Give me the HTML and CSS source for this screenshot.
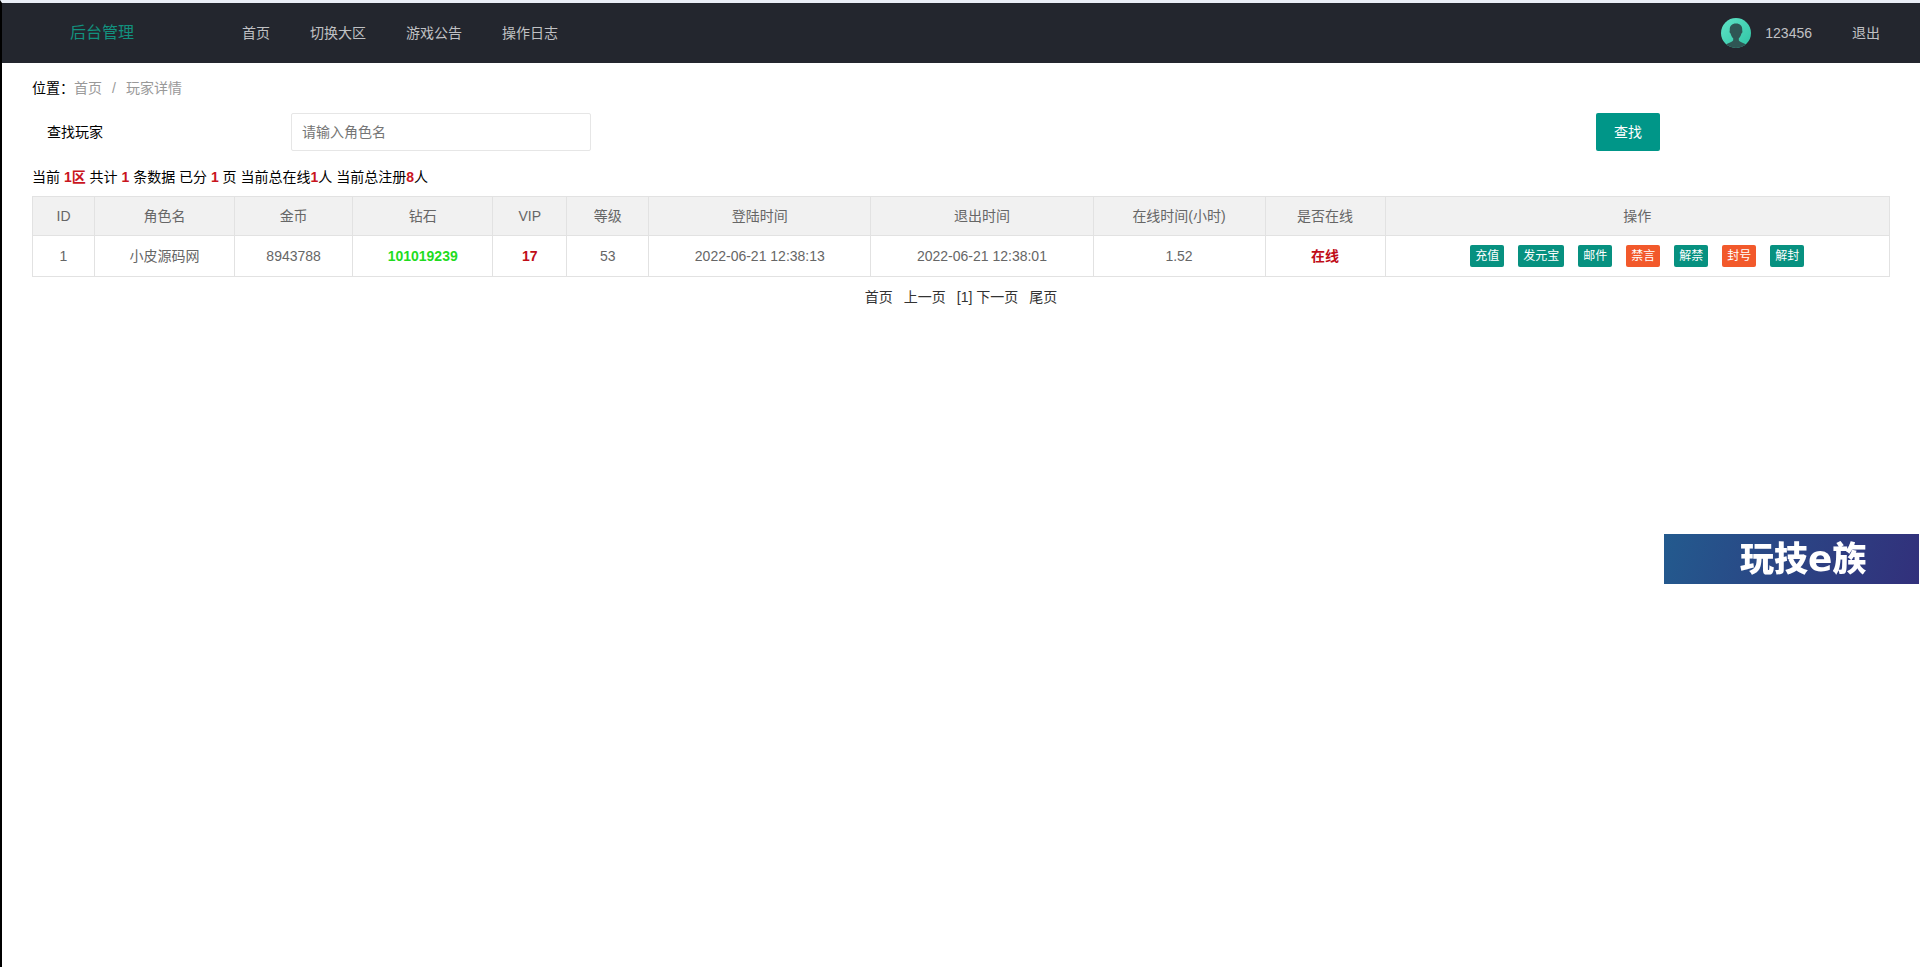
FILE: index.html
```html
<!DOCTYPE html>
<html lang="zh-CN">
<head>
<meta charset="utf-8">
<title>后台管理</title>
<link rel="stylesheet" href="styles.css">
</head>
<body>
<header class="header">
  <a class="logo" href="#">后台管理</a>
  <nav class="nav">
    <a href="#">首页</a>
    <a href="#">切换大区</a>
    <a href="#">游戏公告</a>
    <a href="#">操作日志</a>
  </nav>
  <div class="user">
    <a class="account" href="#">
      <svg class="avatar" viewBox="0 0 30 30" aria-hidden="true">
        <defs>
          <linearGradient id="mint" x1="0" y1="0" x2="1" y2="1"><stop offset="0" stop-color="#5fe3c6"/><stop offset="1" stop-color="#2fc4a4"/></linearGradient>
          <clipPath id="disc"><circle cx="15" cy="15" r="15"/></clipPath>
        </defs>
        <g clip-path="url(#disc)">
          <rect width="30" height="30" fill="url(#mint)"/>
          <path d="M15 5.500c-4.500 0-6.500 2.800-6.200 6.500 0 .6-.3 1-.2 2 .1.9.6 1.300 1 1.500.5 2.200 1.400 3.700 2.600 4.800v2c-.9 2-5 2.200-7.400 4.700V31h20.400v-4c-2.400-2.500-6.500-2.700-7.400-4.700v-2c1.200-1.100 2.100-2.600 2.600-4.800.4-.2.900-.6 1-1.500.1-1-.2-1.400-.2-2 .3-3.700-1.700-6.500-6.200-6.500z" fill="#2f5654"/>
        </g>
      </svg>
      <span>123456</span>
    </a>
    <a href="#">退出</a>
  </div>
</header>
<main class="main">
  <div class="crumbs">位置：<a href="#">首页</a><span class="slash">/</span><a href="#">玩家详情</a></div>
  <form class="search">
    <label for="role">查找玩家</label>
    <input id="role" type="text" placeholder="请输入角色名">
    <button class="find" type="button">查找</button>
  </form>
  <p class="stats">当前 <b>1区</b> 共计 <b>1</b> 条数据 已分 <b>1</b> 页 当前总在线<b>1</b>人 当前总注册<b>8</b>人</p>
  <table class="players">
    <colgroup>
      <col class="c-id"><col class="c-name"><col class="c-gold"><col class="c-name"><col class="c-vip"><col class="c-level"><col class="c-time"><col class="c-time"><col class="c-hours"><col class="c-online"><col class="c-actions">
    </colgroup>
    <thead>
      <tr><th>ID</th><th>角色名</th><th>金币</th><th>钻石</th><th>VIP</th><th>等级</th><th>登陆时间</th><th>退出时间</th><th>在线时间(小时)</th><th>是否在线</th><th>操作</th></tr>
    </thead>
    <tbody>
      <tr>
        <td>1</td><td>小皮源码网</td><td>8943788</td><td class="green">101019239</td><td class="red">17</td><td>53</td><td>2022-06-21 12:38:13</td><td>2022-06-21 12:38:01</td><td>1.52</td><td class="red">在线</td>
        <td><div class="actions">
          <button type="button">充值</button>
          <button type="button">发元宝</button>
          <button type="button">邮件</button>
          <button type="button" class="danger">禁言</button>
          <button type="button">解禁</button>
          <button type="button" class="danger">封号</button>
          <button type="button">解封</button>
        </div></td>
      </tr>
    </tbody>
  </table>
  <nav class="pager"><a href="#">首页</a><a href="#">上一页</a><span>[1] <a href="#">下一页</a></span><a href="#">尾页</a></nav>
</main>
<aside class="banner">玩技<span>e</span>族</aside>
</body>
</html>
```
FILE: styles.css
```css
* { box-sizing: border-box; }

body {
  margin: 0;
  min-height: 100vh;
  border-left: 2px solid #000;
  border-top: 3px solid #e9eef6;
  background: #fff;
  color: #000;
  font: 14px/24px "Liberation Sans", "Noto Sans CJK SC", sans-serif;
}

a { color: inherit; text-decoration: none; }

button, input { font: inherit; }

.header {
  display: flex;
  align-items: center;
  height: 60px;
  background: #23262e;
  color: #c0c1c4;
}

.logo {
  width: 220px;
  padding-left: 68px;
  color: #12917f;
  font-size: 16px;
}

.nav { display: flex; }

.nav a { padding: 0 20px; }

.user {
  display: flex;
  align-items: center;
  gap: 40px;
  margin-left: auto;
  padding-right: 40px;
}

.account {
  display: flex;
  align-items: center;
  gap: 14px;
}

.avatar { width: 30px; height: 30px; }

.main { padding: 13px 30px; }

.crumbs a, .slash { color: #999; }

.slash { margin: 0 10px; }

.search {
  display: grid;
  grid-template-columns: 244px 1fr 294px;
  align-items: center;
  margin-top: 13px;
  padding-left: 15px;
}

.search input {
  width: 300px;
  height: 38px;
  padding: 0 10px;
  border: 1px solid #e6e6e6;
  border-radius: 2px;
  background: #fff;
  color: #333;
}

.search input::placeholder { color: #757575; opacity: 1; }

.find {
  justify-self: start;
  width: 64px;
  height: 38px;
  padding: 0;
  border: 0;
  border-radius: 2px;
  background: #009688;
  color: #fff;
}

.stats { margin: 14px 0 7px; }

.stats b { color: #c9151e; }

.players {
  width: 100%;
  table-layout: fixed;
  border-collapse: collapse;
  color: #666;
  text-align: center;
}

.c-id { width: 62px; }
.c-name { width: 140px; }
.c-gold { width: 118px; }
.c-vip { width: 74px; }
.c-level { width: 82px; }
.c-time { width: 222px; }
.c-hours { width: 172px; }
.c-online { width: 120px; }
.c-actions { width: 504px; }

.players th, .players td {
  padding: 0;
  border: 1px solid #e2e2e2;
  font-weight: 400;
}

.players th { height: 39px; background: #f1f1f1; }

.players td { height: 41px; }

.players .green { color: #1fdc1f; font-weight: 700; }

.players .red { color: #c00d18; font-weight: 700; }

.actions {
  display: flex;
  justify-content: center;
  gap: 14px;
}

.actions button {
  height: 22px;
  padding: 0 5px;
  border: 0;
  border-radius: 2px;
  background: #079180;
  color: #fff;
  font-size: 12px;
  line-height: 22px;
}

.actions .danger { background: #f2592b; }

.pager {
  display: flex;
  justify-content: center;
  gap: 11px;
  margin-top: 8px;
  color: #333;
}

.banner {
  position: fixed;
  top: 534px;
  right: 1px;
  width: 255px;
  height: 50px;
  padding-left: 76px;
  background: linear-gradient(105deg, #235a8e 0%, #2b4484 50%, #32307b 100%);
  color: #fff;
  font: 900 34px/46px "Noto Sans CJK SC", sans-serif;
}

.banner span { font: 700 36px/24px "DejaVu Sans", sans-serif; }
```
